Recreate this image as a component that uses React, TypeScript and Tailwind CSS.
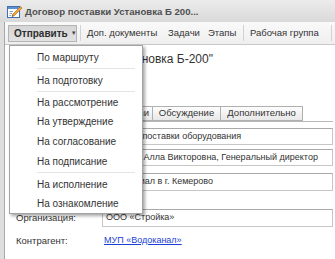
const menuItems: { label: string; h: string; sepAfter?: boolean }[] = [
  { label: 'По маршруту', h: 'h-[20px]', sepAfter: true },
  { label: 'На подготовку', h: 'h-[20px]', sepAfter: true },
  { label: 'На рассмотрение', h: 'h-[19px]' },
  { label: 'На утверждение', h: 'h-[19px]' },
  { label: 'На согласование', h: 'h-[20px]' },
  { label: 'На подписание', h: 'h-[20px]', sepAfter: true },
  { label: 'На исполнение', h: 'h-[20px]' },
  { label: 'На ознакомление', h: 'h-[19px]' },
]

function DocIcon() {
  return (
    <svg width="15" height="14" viewBox="0 0 15 14">
      <rect x="0.5" y="1.5" width="12" height="11" fill="#ffffff" stroke="#3f6fb0" />
      <rect x="1" y="2" width="11" height="2" fill="#5b8fd0" />
      <line x1="2.5" y1="6.5" x2="6" y2="6.5" stroke="#7fa3d3" />
      <line x1="2.5" y1="8.5" x2="5" y2="8.5" stroke="#7fa3d3" />
      <line x1="2.5" y1="10.5" x2="4" y2="10.5" stroke="#7fa3d3" />
      <path d="M13.5 1.5 L6 9 L5 11.5 L7.5 10.5 L15 3 Z" fill="#f2a93b" stroke="#b8661c" strokeWidth="0.7" />
      <path d="M5 11.5 L5.6 10 L6.5 10.9 Z" fill="#4a3a2a" />
    </svg>
  )
}

function TitleBar() {
  return (
    <div className="flex h-[22px] items-center bg-gradient-to-b from-[#ececec] to-[#d9d9d9] pl-[7px] pt-[2px]">
      <DocIcon />
      <span className="ml-[3px] whitespace-nowrap text-[9.6px] font-bold text-[#4f4f4f]">
        Договор поставки Установка Б 200...
      </span>
    </div>
  )
}

function Sep() {
  return <div className="mx-[3px] h-[16px] w-px shrink-0 bg-[#d2d2d2]" />
}

function Toolbar() {
  return (
    <div className="flex h-[23px] items-center whitespace-nowrap border-b border-[#c8c8c8] bg-gradient-to-b from-[#fafafa] to-[#efefef] text-[9.5px] text-[#333]">
      <div className="ml-[3px] flex h-[17px] w-[69px] shrink-0 items-center border border-[#b4b4b4] bg-gradient-to-b from-[#d6d6d6] to-[#e2e2e2] pl-[5px]">
        <span className="text-[10px] font-bold text-[#2e2e2e]">Отправить</span>
        <span className="ml-[3px] text-[6px] text-[#444]">▼</span>
      </div>
      <Sep />
      <span className="ml-[3px] w-[81px] shrink-0">Доп. документы</span>
      <span className="w-[40px] shrink-0">Задачи</span>
      <span className="w-[32px] shrink-0">Этапы</span>
      <Sep />
      <span className="ml-[3px] w-[78px] shrink-0">Рабочая группа</span>
      <Sep />
    </div>
  )
}

function Field({ label, value, box }: { label?: string; value: string; box: string }) {
  return (
    <div className={`flex items-center ${box}`}>
      <span className="w-[86px] shrink-0 text-[9.5px] text-[#333]">{label}</span>
      <div className="flex h-full min-w-0 flex-1 items-center overflow-hidden whitespace-nowrap border border-[#c6c6c6] border-t-[#a9a9a9] bg-white pl-[3px] text-[9px] text-[#333]">
        {value}
      </div>
    </div>
  )
}

const tabCls = 'flex items-center border border-[#b0b0b0] bg-gradient-to-b from-[#fdfdfd] to-[#e8e8e8]'

function Content() {
  return (
    <div className="pl-[11px] pr-[2px] pt-[5px]">
      <div className="-ml-[5px] h-[18px] whitespace-nowrap text-[12px] leading-[18px] text-[#333]">
        Договор поставки "Установка Б-200"
      </div>
      <div className="mt-[38px] flex h-[16px] border-b border-[#b8b8b8] text-[9.5px] text-[#333]">
        <div className={`${tabCls} w-[64px]`} />
        <div className={`${tabCls} w-[73px] justify-end border-l-0 pr-[3px]`}>Связи</div>
        <div className={`${tabCls} w-[68px] justify-center border-l-0`}>Обсуждение</div>
        <div className={`${tabCls} w-[82px] justify-center border-l-0`}>Дополнительно</div>
      </div>
      <Field value="Договор поставки оборудования" box="mt-[6px] h-[17px]" />
      <Field value="Петрова Алла Викторовна, Генеральный директор" box="mt-[4px] h-[17px]" />
      <Field value="ОП филиал в г. Кемерово" box="mt-[7px] h-[18px]" />
      <Field label="Организация:" value="ООО «Стройка»" box="mt-[18px] h-[18px]" />
      <div className="mt-[5px] flex h-[18px] items-center">
        <span className="w-[86px] shrink-0 text-[9.5px] text-[#333]">Контрагент:</span>
        <span className="pl-[2px] text-[9px] text-[#1a3fd6] underline">МУП «Водоканал»</span>
      </div>
    </div>
  )
}

function SendMenu() {
  return (
    <div className="absolute left-[9px] top-[45px] h-[169px] w-[134px] border border-[#a3a3a3] bg-white pt-[1px] text-[10px] text-[#333] shadow-[2px_2px_3px_rgba(0,0,0,0.35)]">
      {menuItems.map((item) => (
        <div key={item.label}>
          <div className={`flex items-center pl-[27px] ${item.h}`}>{item.label}</div>
          {item.sepAfter && (
            <div className="flex h-[3px] items-center">
              <div className="ml-[27px] mr-[7px] h-px flex-1 bg-[#e4e4e4]" />
            </div>
          )}
        </div>
      ))}
    </div>
  )
}

export default function App() {
  return (
    <div className="relative h-[259px] w-[335px] overflow-hidden bg-white font-['Liberation_Sans',Arial,sans-serif]">
      <TitleBar />
      <div className="flex h-[237px]">
        <div className="w-[5px] shrink-0 border-r border-[#a8a8a8] bg-[#dedede]" />
        <div className="min-w-0 flex-1">
          <Toolbar />
          <Content />
        </div>
      </div>
      <SendMenu />
    </div>
  )
}
